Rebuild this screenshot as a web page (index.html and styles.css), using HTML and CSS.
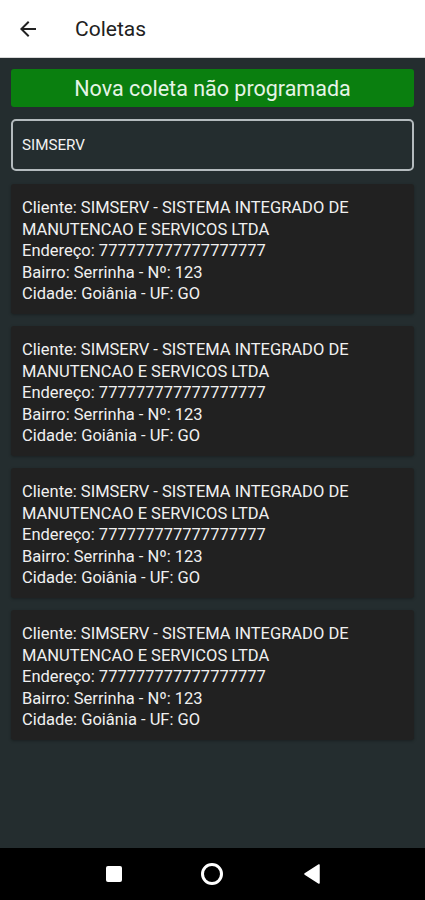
FILE: index.html
```html
<!DOCTYPE html>
<html lang="pt-BR">
<head>
<meta charset="utf-8">
<title>Coletas</title>
<link rel="stylesheet" href="styles.css">
</head>
<body>
<div class="screen">
  <header class="appbar">
    <svg class="back" width="24" height="24" viewBox="0 0 24 24"><path d="M20 11H7.83l5.59-5.59L12 4l-8 8 8 8 1.41-1.41L7.83 13H20v-2z" fill="#222"/></svg>
    <h1 class="title">Coletas</h1>
  </header>
  <main class="content">
    <button class="new-btn">Nova coleta não programada</button>
    <div class="search">SIMSERV</div>
    <div class="list">
      <div class="card">
        <p>Cliente: SIMSERV - SISTEMA INTEGRADO DE MANUTENCAO E SERVICOS LTDA</p>
        <p>Endereço: 777777777777777777</p>
        <p>Bairro: Serrinha - Nº: 123</p>
        <p>Cidade: Goiânia - UF: GO</p>
      </div>
      <div class="card">
        <p>Cliente: SIMSERV - SISTEMA INTEGRADO DE MANUTENCAO E SERVICOS LTDA</p>
        <p>Endereço: 777777777777777777</p>
        <p>Bairro: Serrinha - Nº: 123</p>
        <p>Cidade: Goiânia - UF: GO</p>
      </div>
      <div class="card">
        <p>Cliente: SIMSERV - SISTEMA INTEGRADO DE MANUTENCAO E SERVICOS LTDA</p>
        <p>Endereço: 777777777777777777</p>
        <p>Bairro: Serrinha - Nº: 123</p>
        <p>Cidade: Goiânia - UF: GO</p>
      </div>
      <div class="card">
        <p>Cliente: SIMSERV - SISTEMA INTEGRADO DE MANUTENCAO E SERVICOS LTDA</p>
        <p>Endereço: 777777777777777777</p>
        <p>Bairro: Serrinha - Nº: 123</p>
        <p>Cidade: Goiânia - UF: GO</p>
      </div>
    </div>
  </main>
  <nav class="navbar">
    <span class="nav-square"></span>
    <span class="nav-circle"></span>
    <svg class="nav-back" width="16" height="20" viewBox="0 0 16 20"><path d="M15 1 L15 19 L1 10 Z" fill="#fff" stroke="#fff" stroke-width="1.5" stroke-linejoin="round"/></svg>
  </nav>
</div>
</body>
</html>
```
FILE: styles.css
```css
* { box-sizing: border-box; }
html, body { margin: 0; padding: 0; }
body {
  font-family: Roboto, "Noto Sans", "Liberation Sans", sans-serif;
  background: #242d2f;
}
.screen {
  width: 425px;
  height: 900px;
  display: flex;
  flex-direction: column;
}
.appbar {
  height: 58px;
  background: #ffffff;
  display: flex;
  align-items: center;
  padding-left: 16px;
  border-bottom: 1px solid #d8d8d8;
}
.back { flex: none; }
.title {
  margin: 0 0 0 35px;
  font-size: 21px;
  font-weight: 400;
  color: #212121;
}
.content {
  flex: 1;
  background: #242d2f;
  padding: 11px 11px 0 11px;
  display: flex;
  flex-direction: column;
}
.new-btn {
  height: 38px;
  border: none;
  border-radius: 3px;
  background: #0a7f0f;
  color: #e6f4e6;
  font-family: inherit;
  font-size: 21.5px;
  padding: 0;
}
.search {
  margin-top: 12px;
  height: 52px;
  border: 2px solid #b4bbbe;
  border-radius: 5px;
  background: transparent;
  color: #f2f2f2;
  font-size: 15.2px;
  display: flex;
  align-items: center;
  padding-left: 9px;
}
.list {
  margin-top: 13px;
  display: flex;
  flex-direction: column;
  gap: 12px;
}
.card {
  height: 130px;
  background: #212121;
  border-radius: 3px;
  padding: 13px 11px 0 11px;
  box-shadow: 0 1px 3px rgba(0,0,0,0.3);
}
.card p {
  margin: 0;
  color: #f0f0f0;
  font-size: 16.5px;
  line-height: 21.5px;
}
.navbar {
  height: 52px;
  background: #000;
  display: flex;
  align-items: center;
  justify-content: center;
}
.nav-square {
  width: 16px;
  height: 16px;
  background: #fff;
  border-radius: 2px;
  margin-right: 79.5px;
}
.nav-circle {
  width: 22px;
  height: 22px;
  border: 3px solid #fff;
  border-radius: 50%;
  margin-right: 80.5px;
}
.nav-back { flex: none; }
```
